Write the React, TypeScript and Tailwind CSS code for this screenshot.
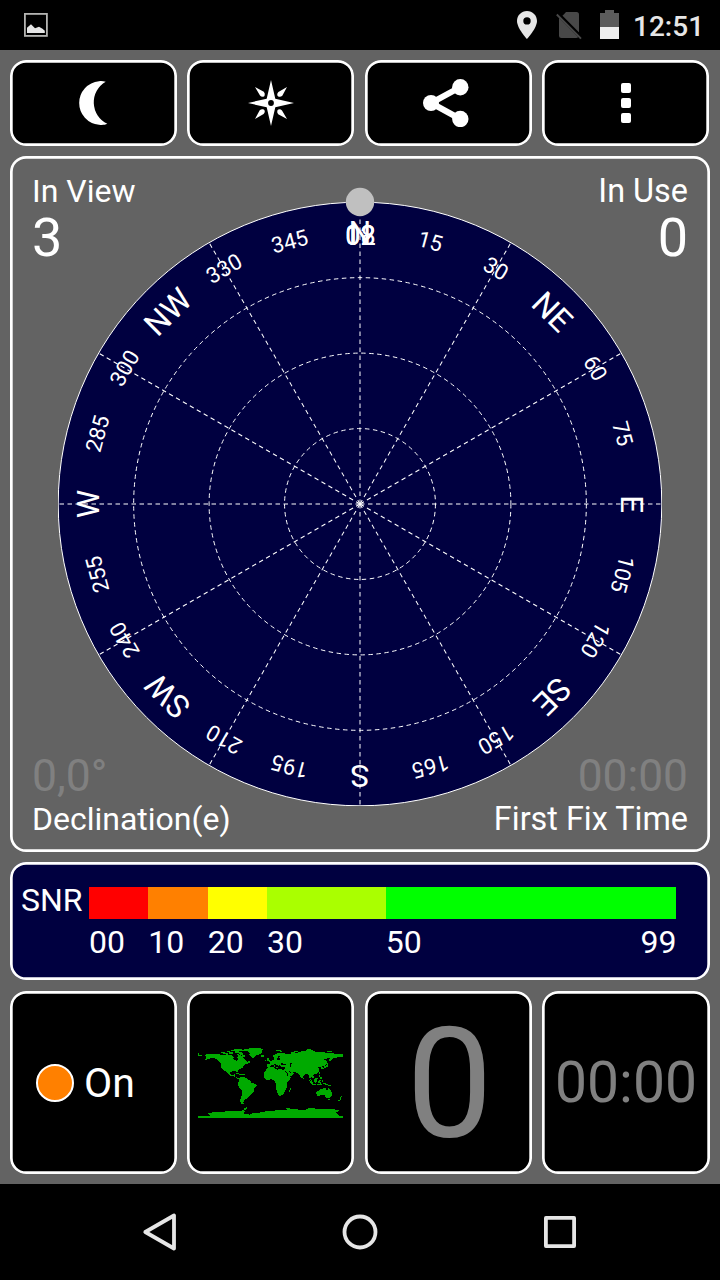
import React from 'react';

const CENTER = 302;
const RADIUS = 301.8;
const LABEL_RADIUS = 272;

const CARDINALS: Record<number, string> = {
  0: 'N',
  45: 'NE',
  90: 'E',
  135: 'SE',
  180: 'S',
  225: 'SW',
  270: 'W',
  315: 'NW',
};

const SATELLITES = ['02', '08', '12'];

const SNR_LEVELS = [
  { label: '00', className: 'grow-10 bg-[#ff0000]', span: 'grow-10' },
  { label: '10', className: 'grow-10 bg-[#ff8000]', span: 'grow-10' },
  { label: '20', className: 'grow-10 bg-[#ffff00]', span: 'grow-10' },
  { label: '30', className: 'grow-20 bg-[#aaff00]', span: 'grow-20' },
  { label: '50', className: 'grow-49 bg-[#00ff00]', span: 'grow-49' },
];

function StatusBar() {
  return (
    <div className="flex h-[50px] items-start justify-between bg-black pr-4 pl-6 text-[#e6e6e6]">
      <svg className="mt-[13px]" width="24" height="24" viewBox="0 0 24 24">
        <rect x="0.9" y="0.9" width="22" height="22" fill="none" stroke="#b4b4b2" strokeWidth="1.8" />
        <path d="M3 20V14.8L7 11.3L11 15.2L15 13.8L18.5 15.8L20.8 17.8V20Z" fill="#e6e6e6" />
      </svg>
      <div className="flex items-start">
        <svg className="mt-[10px]" width="104" height="30" viewBox="516 10 104 30">
          <path
            fill="#e6e6e6"
            fillRule="evenodd"
            d="M527 11C521.4 11 517 15.4 517 21C517 28.3 527 39 527 39C527 39 537 28.3 537 21C537 15.4 532.6 11 527 11ZM527 17.2a3.7 3.7 0 1 1 0 7.4a3.7 3.7 0 0 1 0 -7.4Z"
          />
          <path fill="#484848" d="M564 14.2L566 12H576.5Q579 12 579 14.5V32.5L562.4 15.8Z" />
          <path fill="#484848" d="M559 17.8L578.2 37Q577.6 38 576 38H561.5Q559 38 559 35.5Z" />
          <path d="M558.5 13.5L581 36" stroke="#000" strokeWidth="2" />
          <path d="M556.8 14.5L581 38.7" stroke="#484848" strokeWidth="1.9" />
          <path fill="#5c5c5c" d="M600 13H605V10H614V13H619V27H600Z" />
          <path fill="#efefef" d="M600 27H619V39H600Z" />
        </svg>
        <span className="ml-[13px] w-[71px] text-[28px] leading-[54px] font-medium">12:51</span>
      </div>
    </div>
  );
}

function Card({ className = '', children }: { className?: string; children: React.ReactNode }) {
  return (
    <div className={`rounded-[16px] shadow-[inset_0_0_0_2.7px_#fff] ${className}`}>
      {children}
    </div>
  );
}

function Toolbar() {
  return (
    <div className="grid h-[86px] grid-cols-[167px_168px_167px_168px] gap-2.5">
      <Card className="flex items-center justify-center bg-black">
        <svg width="31" height="46" viewBox="78 80 31 46">
          <path fill="#fff" d="M105.7 81.7C103 81 101 81 99 81.2A21.9 21.9 0 0 0 99 124.8C102 125.2 105 125 107.3 123.8A23.8 23.8 0 0 1 105.7 81.7Z" />
        </svg>
      </Card>
      <Card className="mr-px flex items-center justify-center bg-black">
        <svg width="47" height="46" viewBox="-24 -23 47 46">
          <path fill="#fff" d="M0 -23L4.3 -4.3L23 0L4.3 4.3L0 23L-4.3 4.3L-23 0L-4.3 -4.3Z" />
          {[0, 90, 180, 270].map((a) => (
            <path key={a} fill="#fff" transform={`rotate(${a})`} d="M16 -16L11.3 -7.2Q9.6 -5.8 7.8 -6.3Q6.3 -6.6 6.2 -8.2Q6.2 -10 7.4 -11Z" />
          ))}
          <circle r="2.9" fill="#000" />
        </svg>
      </Card>
      <Card className="flex items-center justify-center bg-black">
        <svg width="55" height="48" viewBox="421 79 55 48">
          <path d="M460.3 87.2L431 103L460.3 119" fill="none" stroke="#fff" strokeWidth="6" />
          <circle cx="431" cy="103" r="8" fill="#fff" />
          <circle cx="460.3" cy="87.2" r="8.2" fill="#fff" />
          <circle cx="460.3" cy="119" r="8.2" fill="#fff" />
        </svg>
      </Card>
      <Card className="mr-px flex flex-col items-center justify-center gap-[5px] bg-black">
        <span className="size-2.5 rounded-[2px] bg-white" />
        <span className="size-2.5 rounded-[2px] bg-white" />
        <span className="size-2.5 rounded-[2px] bg-white" />
      </Card>
    </div>
  );
}

function SkyPlot() {
  const labels = Array.from({ length: 24 }, (_, i) => i * 15);

  return (
    <svg width="604" height="620" viewBox="0 -16 604 620" className="block">
      <circle cx={CENTER} cy={CENTER} r={RADIUS} fill="#000040" stroke="#fff" strokeWidth="1" />
      <g fill="none" stroke="#fff" strokeWidth="1" strokeDasharray="4.5 3.5">
        {[1, 2, 3].map((n) => (
          <circle key={n} cx={CENTER} cy={CENTER} r={(RADIUS * n) / 4} />
        ))}
        {Array.from({ length: 12 }, (_, i) => (
          <line
            key={i}
            x1={CENTER}
            y1={CENTER}
            x2={CENTER}
            y2={CENTER - RADIUS}
            transform={`rotate(${i * 30} ${CENTER} ${CENTER})`}
          />
        ))}
      </g>
      <g fill="#fff" textAnchor="middle">
        {labels.map((deg) => {
          const size = CARDINALS[deg] ? 32 : 22;
          return (
            <text
              key={deg}
              x={CENTER}
              y={CENTER - LABEL_RADIUS + size * 0.3555}
              fontSize={size}
              transform={`rotate(${deg} ${CENTER} ${CENTER})`}
            >
              {CARDINALS[deg] ?? deg}
            </text>
          );
        })}
        {/* satellites without a known azimuth pile up on north */}
        {SATELLITES.map((id) => (
          <text key={id} x={CENTER + 0.5} y="43" fontSize="27">{id}</text>
        ))}
      </g>
      <circle cx={CENTER} cy="0" r="14.2" fill="#c0c0c0" />
    </svg>
  );
}

function SkyPanel() {
  return (
    <Card className="grid h-[696px] grid-cols-1 grid-rows-1">
      <div className="col-start-1 row-start-1 flex justify-center pt-[30px]">
        <SkyPlot />
      </div>
      <div className="col-start-1 row-start-1 flex flex-col justify-between px-[22px] pt-[15px] pb-[13px] text-white">
        <div className="flex justify-between">
          <div>
            <div className="text-[32px] leading-10">In View</div>
            <div className="text-[54px] leading-[54px]">3</div>
          </div>
          <div className="text-right">
            <div className="text-[32.4px] leading-10">In Use</div>
            <div className="text-[54px] leading-[54px]">0</div>
          </div>
        </div>
        <div className="flex justify-between">
          <div>
            <div className="text-[44.5px] leading-[46px] text-[#808080]">0,0°</div>
            <div className="text-[32px] leading-10">Declination(e)</div>
          </div>
          <div className="text-right">
            <div className="text-[44.3px] leading-[46px] text-[#808080]">00:00</div>
            <div className="text-[32.4px] leading-10">First Fix Time</div>
          </div>
        </div>
      </div>
    </Card>
  );
}

function SnrPanel() {
  return (
    <Card className="flex h-[118px] bg-[#000040] pt-[25px] pr-[33.6px] pl-[11px] text-[32px] text-white">
      <div className="w-[68px] shrink-0 leading-[26px]">SNR</div>
      <div className="flex-1">
        <div className="flex h-8">
          {SNR_LEVELS.map((level) => (
            <div key={level.label} className={`basis-0 ${level.className}`} />
          ))}
        </div>
        <div className="flex leading-[46px]">
          {SNR_LEVELS.map((level) => (
            <div key={level.label} className={`flex w-0 basis-0 justify-between ${level.span}`}>
              <span>{level.label}</span>
              {level.label === '50' && <span>99</span>}
            </div>
          ))}
        </div>
      </div>
    </Card>
  );
}

function WorldMap() {
  return (
    <svg width="145" height="72" viewBox="24 36 435 216" fill="#00aa00" shapeRendering="crispEdges">
      {/* north america */}
      <path d="M42 60L54 57L78 56L96 60L112 58L126 61L132 66L130 72L136 76L140 79L144 74L142 66L146 58L154 62L160 68L166 76L174 81L177 84L168 88L162 90L160 96L152 101L146 105L141 113L138 108L128 108L121 112L122 119L128 121L133 117L136 118L134 124L141 127L148 132L142 131L135 126L126 123L118 121L113 114L106 109L99 105L94 98L93 84L86 78L82 73L70 69L58 71L48 74L44 73L52 69L44 66L50 63Z" />
      <path d="M24 54h4v6h8v3H24ZM93 50h12v3H93ZM99 54h15v3H99ZM111 48h9v3h-9ZM116 52h14v4h-14ZM124 45h15v3h-15ZM132 41h24v3h-24ZM134 49h12v4h-12ZM138 45h20v3h-20ZM147 51h8v4h5v5h6v7h-9v-6h-7ZM140 56h6v4h-6ZM150 70h6v4h-6ZM174 79h5v5h-5Z" />
      <path d="M139 113h8v3h-8ZM146 117h9v3h-9ZM157 118h7v3h-7Z" />
      {/* greenland, iceland */}
      <path d="M156 45L172 41L192 39L207 39L221 43L216 48L217 54L210 58L200 61L195 66L190 69L183 66L178 60L180 54L173 49L162 48Z" />
      <path d="M213 61h10v4h-10ZM258 44h16v3h-16ZM270 48h5v3h-5ZM304 51h12v3h-12ZM312 48h12v3h-12ZM351 42h13v3h-13ZM411 49h14v3h-14Z" />
      {/* south america */}
      <path d="M147 129L155 125L166 128L174 133L181 137L183 143L192 146L200 149L200 154L193 161L191 171L184 176L179 183L173 188L168 193L162 195L161 200L158 203L162 206L154 206L151 201L151 193L155 181L157 168L151 162L144 151L145 143L148 137Z" />
      {/* africa, madagascar */}
      <path d="M235 97L252 96L254 101L262 104L270 102L283 105L287 113L294 124L303 125L300 132L292 141L291 157L287 162L285 170L279 180L268 183L264 179L261 168L257 158L259 148L254 140L252 135L242 133L231 135L222 127L222 114L228 105Z" />
      <path d="M299 158h4v6h-2v6h-5v-6h3Z" />
      {/* europe and asia */}
      <path d="M232 95L232 87L241 86L237 80L247 76L254 72L250 66L249 61L258 57L267 53L280 53L286 57L296 58L303 55L320 55L330 50L342 48L352 46L362 43L372 48L380 51L394 51L408 53L420 54L436 56L459 57L459 65L446 65L438 69L431 69L426 75L420 80L417 75L422 69L411 70L402 74L411 79L410 86L403 92L396 93L399 100L395 100L390 95L383 96L388 103L388 109L382 115L374 118L368 119L373 126L370 131L364 127L361 131L366 138L361 136L357 124L354 117L345 118L339 124L337 132L332 128L327 117L318 112L308 111L314 115L308 121L297 125L291 120L285 109L282 103L286 97L275 97L271 91L266 87L269 96L262 91L256 87L250 89L243 90L239 96Z" />
      <path d="M231 70h6v4h2v5h-9v-3h3ZM225 75h4v4h-4ZM252 91h3v5h-3ZM258 96h7v3h-7ZM276 98h6v2h-6Z" />
      <path fill="#000" d="M260 72L265 64L269 63L267 70L274 71L274 73L262 75ZM273 83h5v3h10v4h-15ZM300 83h6v5h-2v7h-4ZM286 107L292 112L295 120L292 119L285 109ZM297 108L304 113L302 115L298 112Z" />
      {/* japan, indonesia */}
      <path d="M411 84h4v5h-4ZM407 91h6v4h-4v3h-7v3h-6v-3h6v-4h5ZM393 99h4v3h-4ZM387 112h3v5h-3ZM338 128h3v5h-3ZM386 120h5v6h4v4h-6v-4h-3ZM391 128h5v5h-5ZM356 134h5v3h4v4h4v5h-5v-3h-4v-4h-4ZM366 146h13v3h-13ZM373 134L378 129L383 130L381 142L375 143L372 138ZM386 135h6v3h-3v3h4v5h-3v-3h-5ZM381 148h14v3h-14ZM398 143h9v4h8v4h8v3h-9v-3h-8v-3h-8ZM396 135h3v5h-3ZM417 146h7v2h-7Z" />
      {/* australia, new zealand */}
      <path d="M379 170L389 166L394 161L400 162L401 158L410 158L408 163L413 165L416 157L419 162L424 170L427 177L424 186L417 190L409 188L404 181L394 180L386 184L380 182Z" />
      <path d="M415 192h5v3h-5ZM453 183h3v4h-2v4h-3v-5h2ZM449 191h4v3h-4ZM445 194h4v3h-4Z" />
      {/* antarctica */}
      <path d="M24 243H64L55 238V233H66V231H96L110 229H126L140 227H154L163 223V226L155 229H166L160 235L180 239L188 235L206 234L218 230L232 229L246 227L264 226H282L294 223L318 222L328 225H345L356 220H372L384 222H403L432 223L446 226V229L437 231L440 236L447 240V243H459V249H24Z" />
      <path d="M162 219h5v-3h4v5h-4v3h-5ZM288 220h13v3h-13Z" />
    </svg>
  );
}

function BottomTiles() {
  return (
    <div className="grid h-[183px] grid-cols-[167px_168px_167px_168px] gap-2.5">
      <Card className="flex items-center bg-black pl-[26px]">
        <span className="size-[38px] rounded-full border-2 border-white bg-[#ff8000]" />
        <span className="ml-2.5 text-[41px] leading-[48px] text-white">On</span>
      </Card>
      <Card className="mr-px flex items-center justify-center bg-black">
        <WorldMap />
      </Card>
      <Card className="flex items-center justify-center bg-black pt-1 pl-0.5">
        <span className="text-[154px] leading-[170px] text-[#808080]">0</span>
      </Card>
      <Card className="flex items-center justify-center bg-black">
        <span className="text-[57px] leading-[64px] text-[#808080]">00:00</span>
      </Card>
    </div>
  );
}

function NavBar() {
  return (
    <div className="flex h-24 items-center justify-center gap-[164px] bg-black">
      <svg width="36" height="40" viewBox="142 1212 36 40" fill="none" stroke="#e6e6e6" strokeWidth="3.8" strokeLinejoin="round">
        <path d="M174 1215.5V1248.5L145.3 1232Z" />
      </svg>
      <svg width="36" height="36" viewBox="0 0 36 36" fill="none" stroke="#e6e6e6" strokeWidth="3.8">
        <circle cx="18" cy="18" r="15.5" />
      </svg>
      <svg width="36" height="36" viewBox="0 0 36 36" fill="none" stroke="#e6e6e6" strokeWidth="3.8" strokeLinejoin="round">
        <rect x="3.9" y="3.9" width="28.2" height="28.2" />
      </svg>
    </div>
  );
}

export default function App() {
  return (
    <div className="flex h-[1280px] w-[720px] flex-col overflow-hidden bg-[#636363] font-['Roboto',sans-serif]">
      <StatusBar />
      <main className="flex flex-1 flex-col px-2.5 pt-2.5">
        <Toolbar />
        <div className="mt-2.5">
          <SkyPanel />
        </div>
        <div className="mt-2.5">
          <SnrPanel />
        </div>
        <div className="mt-[11px]">
          <BottomTiles />
        </div>
      </main>
      <NavBar />
    </div>
  );
}
